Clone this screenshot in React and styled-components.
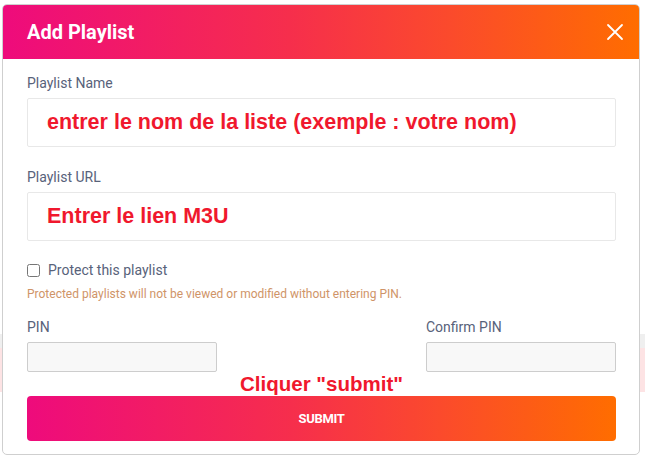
import React from 'react'
import styled, { createGlobalStyle } from 'styled-components'

const GlobalStyle = createGlobalStyle`
	html, body {
		margin: 0;
		padding: 0;
	}
	body {
		font-family: Roboto, 'Liberation Sans', sans-serif;
		background: linear-gradient(
			to bottom,
			#fff 0,
			#fff 334px,
			#efefef 334px,
			#efefef 348px,
			#fde3e4 348px,
			#fde3e4 392px,
			#fff 392px
		);
		min-height: 456px;
	}
`

const brandGradient = 'linear-gradient(90deg, #ee0b7c 0%, #f62e4c 45%, #fb4a2c 70%, #ff6d00 100%)'

const Page = styled.div`
	padding: 4px 4px 2px 2px;
`
const Modal = styled.div`
	width: 638px;
	background: #fff;
	border: 1px solid #cfcfcf;
	border-radius: 5px;
	overflow: hidden;
	box-sizing: border-box;
`
const Header = styled.div`
	height: 54px;
	display: flex;
	align-items: center;
	justify-content: space-between;
	padding: 0 15px 0 24px;
	background: ${brandGradient};
`
const Title = styled.h2`
	margin: 0;
	font-size: 20px;
	font-weight: 700;
	color: #fff;
`
const CloseButton = styled.button`
	border: 0;
	background: none;
	padding: 0;
	display: flex;
	cursor: pointer;
`
const Body = styled.div`
	padding: 14px 23px 13px 24px;
`
const Field = styled.div`
	display: flex;
	flex-direction: column;
	gap: 5px;
	margin-bottom: ${(p) => p.$gap || 19}px;
`
const Label = styled.label`
	font-size: 14px;
	line-height: 20px;
	color: #58627a;
`
const BigInput = styled.input`
	height: 49px;
	box-sizing: border-box;
	border: 1px solid #e8e8e8;
	border-radius: 2px;
	padding: 0 19px;
	background: #fff;
	font-family: 'Liberation Sans', Arial, sans-serif;
	font-weight: 700;
	font-size: 21.5px;
	color: #f0182d;
	outline: none;
`
const CheckRow = styled.label`
	display: flex;
	align-items: center;
	gap: 8px;
	font-size: 14px;
	line-height: 20px;
	color: #58627a;
	input {
		margin: 0;
		width: 13px;
		height: 13px;
	}
`
const Hint = styled.p`
	margin: 6px 0 15px;
	font-size: 12px;
	line-height: 16px;
	color: #cf9468;
`
const PinRow = styled.div`
	display: flex;
	justify-content: space-between;
`
const PinField = styled.div`
	display: flex;
	flex-direction: column;
	gap: 5px;
	width: 190px;
`
const PinInput = styled.input`
	height: 30px;
	box-sizing: border-box;
	border: 1px solid #cdcdcd;
	border-radius: 2px;
	background: #f8f8f8;
	outline: none;
`
const Annotation = styled.div`
	text-align: center;
	font-family: 'Liberation Sans', Arial, sans-serif;
	font-weight: 700;
	font-size: 20.5px;
	line-height: 24px;
	color: #f0182d;
	margin: 0;
`
const SubmitButton = styled.button`
	width: 100%;
	height: 45px;
	border: 0;
	border-radius: 4px;
	background: ${brandGradient};
	color: #fff;
	font-family: Roboto, sans-serif;
	font-weight: 700;
	font-size: 13px;
	letter-spacing: -0.3px;
	cursor: pointer;
`

const CloseIcon = () => (
	<svg width='18' height='18' viewBox='0 0 18 18' fill='none' stroke='#fff' strokeWidth='1.8' strokeLinecap='round'>
		<path d='M2 2 L16 16 M16 2 L2 16' />
	</svg>
)

const App = () => {
	return (
		<>
			<GlobalStyle />
			<Page>
				<Modal>
					<Header>
						<Title>Add Playlist</Title>
						<CloseButton aria-label='close'>
							<CloseIcon />
						</CloseButton>
					</Header>
					<Body>
						<Field $gap={20}>
							<Label>Playlist Name</Label>
							<BigInput defaultValue='entrer le nom de la liste (exemple : votre nom)' />
						</Field>
						<Field>
							<Label>Playlist URL</Label>
							<BigInput defaultValue='Entrer le lien M3U' />
						</Field>
						<CheckRow>
							<input type='checkbox' />
							Protect this playlist
						</CheckRow>
						<Hint>Protected playlists will not be viewed or modified without entering PIN.</Hint>
						<PinRow>
							<PinField>
								<Label>PIN</Label>
								<PinInput type='password' />
							</PinField>
							<PinField>
								<Label>Confirm PIN</Label>
								<PinInput type='password' />
							</PinField>
						</PinRow>
						<Annotation>Cliquer "submit"</Annotation>
						<SubmitButton>SUBMIT</SubmitButton>
					</Body>
				</Modal>
			</Page>
		</>
	)
}

export default App
